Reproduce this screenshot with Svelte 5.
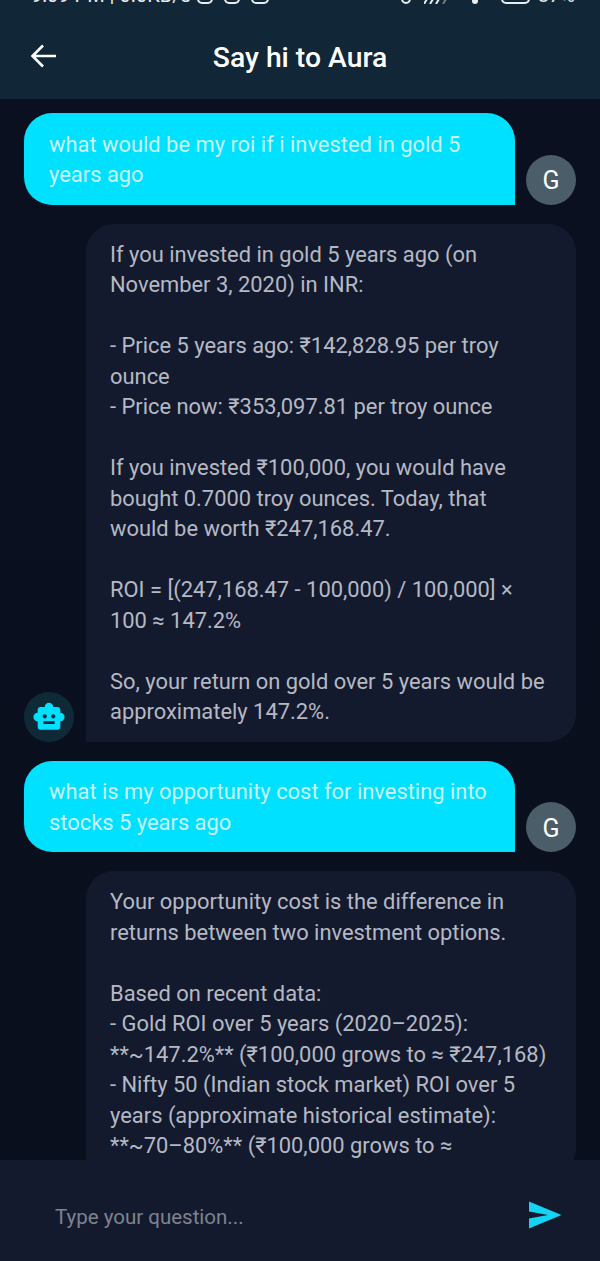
<script lang="ts">
  type Msg = { from: 'user' | 'bot'; text: string; cut?: boolean };
  const messages: Msg[] = [
    { from: 'user', text: 'what would be my roi if i invested in gold 5 years ago' },
    {
      from: 'bot',
      text: `If you invested in gold 5 years ago (on November 3, 2020) in INR:

- Price 5 years ago: ₹142,828.95 per troy ounce
- Price now: ₹353,097.81 per troy ounce

If you invested ₹100,000, you would have bought 0.7000 troy ounces. Today, that would be worth ₹247,168.47.

ROI = [(247,168.47 - 100,000) / 100,000] × 100 ≈ 147.2%

So, your return on gold over 5 years would be approximately 147.2%.`
    },
    { from: 'user', text: 'what is my opportunity cost for investing into stocks 5 years ago' },
    {
      from: 'bot',
      cut: true, // still running past the input bar, avatar is out of view
      text: `Your opportunity cost is the difference in returns between two investment options.

Based on recent data:
- Gold ROI over 5 years (2020–2025): **~147.2%** (₹100,000 grows to ≈ ₹247,168)
- Nifty 50 (Indian stock market) ROI over 5 years (approximate historical estimate): **~70–80%** (₹100,000 grows to ≈`
    }
  ];
</script>

<div class="screen">
  <header class="top">
    <div class="status">
      <span class="clock">9:09 PM | 0.0KB/s</span>
      <i class="cup first"></i>
      <i class="cup"></i>
      <i class="cup wide"></i>
      <i class="cup tiny"></i>
      <svg class="signal" viewBox="0 0 26 5" width="26" height="5" fill="none" stroke="#e8edf0" stroke-width="2">
        <path d="M3 0 0 5M9 0 6 5M15 0 12 5" />
        <path d="M22 0 19 5" stroke="#6d7c86" />
      </svg>
      <i class="dot"></i>
      <i class="cup battery"></i>
      <span class="pct">87%</span>
    </div>
    <div class="bar">
      <svg class="back" viewBox="0 0 26 24" width="26" height="24" fill="none" stroke="#fff" stroke-width="2.6">
        <path d="M26 12H2.500M13 1.500 2.500 12 13 22.500" />
      </svg>
      <h1>Say hi to Aura</h1>
    </div>
  </header>

  <main class="chat">
    {#each messages as m}
      {#if m.from === 'user'}
        <div class="row">
          <div class="bubble user">{m.text}</div>
          <div class="avatar g">G</div>
        </div>
      {:else}
        <div class="row">
          {#if m.cut}
            <div class="avatar"></div>
          {:else}
            <div class="avatar bot">
              <svg viewBox="0 0 24 24" width="34" height="34" fill="#00e0ff">
                <path d="M20 9V7c0-1.100-.9-2-2-2h-3c0-1.660-1.340-3-3-3S9 3.340 9 5H6c-1.100 0-2 .9-2 2v2c-1.660 0-3 1.340-3 3s1.340 3 3 3v4c0 1.100.9 2 2 2h12c1.100 0 2-.9 2-2v-4c1.660 0 3-1.340 3-3s-1.340-3-3-3zM7.500 11.500c0-.83.67-1.500 1.500-1.500s1.500.67 1.500 1.500S9.830 13 9 13s-1.500-.67-1.500-1.500zM16 17H8v-2h8v2zm-1-4c-.83 0-1.500-.67-1.500-1.500S14.170 10 15 10s1.500.67 1.500 1.500S15.830 13 15 13z" />
              </svg>
            </div>
          {/if}
          <div class="bubble reply">{m.text}</div>
        </div>
      {/if}
    {/each}
  </main>

  <footer class="input">
    <span class="placeholder">Type your question...</span>
    <svg class="send" viewBox="0 0 34 28" width="34" height="28" fill="#14d4f4">
      <path d="M1 .5 33.500 14 1 27.500V17.500L20 14 1 10.500z" />
    </svg>
  </footer>
</div>

<style>
  :global(body) { background: #0b1020; }
  .screen { width: 600px; height: 1261px; display: flex; flex-direction: column; overflow: hidden; font-family: Roboto, "Noto Sans", "DejaVu Sans", sans-serif; background: linear-gradient(#0b1020, #0a0f1e); }
  .top { height: 99px; flex: none; background: #112636; overflow: hidden; }
  .status { height: 4px; display: flex; align-items: flex-end; padding-left: 31px; color: #e8edf0; font-size: 20px; line-height: 20px; overflow: hidden; }
  .status span { flex: none; margin-bottom: -1px; }
  .cup { flex: none; width: 16px; height: 8px; margin-left: 11px; border: 2px solid #e8edf0; border-radius: 0 0 5px 5px; box-sizing: border-box; }
  .cup.first { margin-left: 6px; }
  .cup.wide { width: 18px; }
  .cup.tiny { width: 10px; margin-left: 132px; }
  .signal { flex: none; margin-left: 13px; }
  .dot { flex: none; width: 6px; height: 6px; margin: 0 0 0 22px; border-radius: 50%; background: #e8edf0; }
  .cup.battery { width: 29px; margin-left: 23px; }
  .pct { margin-left: 8px; }
  .bar { position: relative; height: 95px; display: flex; align-items: center; justify-content: center; box-sizing: border-box; padding-bottom: 10px; }
  .back { position: absolute; left: 30px; top: 40px; }
  h1 { margin: 0; color: #fff; font-size: 28.300px; font-weight: 500; line-height: 34px; padding-top: 23px; }
  .chat { flex: 1; min-height: 0; overflow: hidden; padding: 14px 24px 0; display: flex; flex-direction: column; gap: 19px; }
  .row { display: flex; align-items: flex-end; justify-content: space-between; flex: none; }
  .bubble { box-sizing: border-box; font-size: 21.900px; line-height: 30.500px; white-space: pre-line; }
  .user { width: 491px; padding: 16.500px 25px 14px; background: #00e0ff; color: #c9f6fb; border-radius: 28px 28px 0 28px; }
  .reply { width: 490px; padding: 16px 27px 14px 24px; background: #141a2e; color: #b5b9c3; border-radius: 28px 28px 28px 0; }
  .avatar { width: 50px; height: 50px; border-radius: 50%; flex: none; display: flex; align-items: center; justify-content: center; }
  .g { background: #4a5d68; color: #fff; font-size: 25px; padding-top: 2px; box-sizing: border-box; }
  .bot { background: #0e2a38; }
  .input { height: 101px; flex: none; background: #141a2e; display: flex; align-items: center; justify-content: space-between; padding: 8px 38px 0 55px; box-sizing: border-box; }
  .placeholder { color: #7e838f; font-size: 20.500px; position: relative; top: 2px; }
</style>
